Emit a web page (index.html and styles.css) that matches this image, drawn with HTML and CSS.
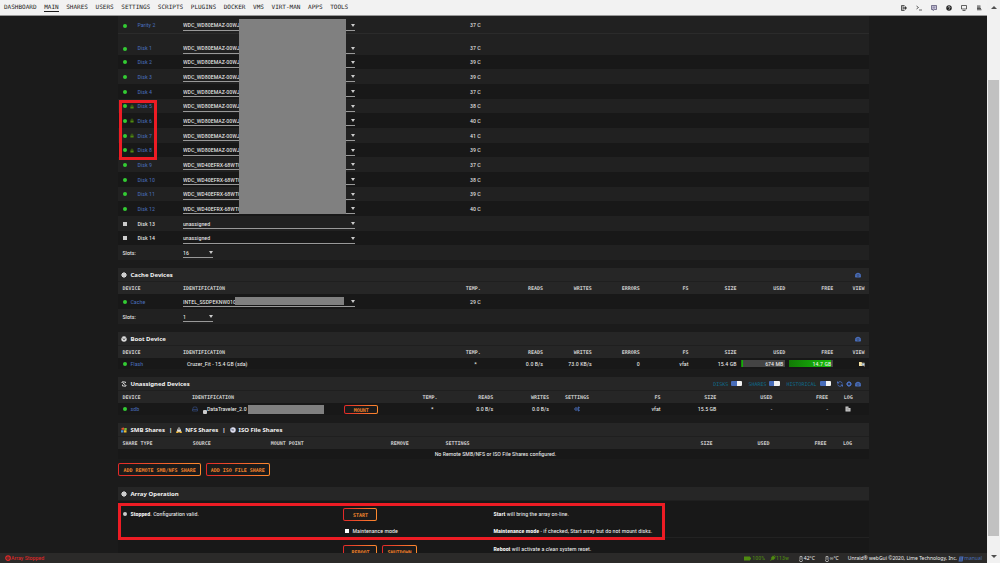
FILE: index.html
```html
<!DOCTYPE html>
<html lang="en">
<head>
<meta charset="utf-8">
<title>Main</title>
<link rel="stylesheet" href="styles.css">
</head>
<body>
<svg class="defs" aria-hidden="true">
  <symbol id="i-lock" viewBox="0 0 10 10"><path d="M1 5h8v5H1z" fill="currentColor"/><path d="M3 5V3a2 2 0 0 1 4 0v2" fill="none" stroke="currentColor" stroke-width="1.5"/></symbol>
  <symbol id="i-gauge" viewBox="0 0 12 12"><path d="M1 11a6 6 0 1 1 10 0z" fill="currentColor"/><path d="M6 10V5M3 8l-1-1M9 8l1-1M4 4l.5 1M8 4l-.5 1" stroke="#262626" stroke-width="1.2"/></symbol>
  <symbol id="i-gear" viewBox="0 0 12 12"><circle cx="6" cy="6" r="3.3" fill="none" stroke="currentColor" stroke-width="2.6"/><path d="M6 0v3M6 9v3M0 6h3M9 6h3M2 2l2 2M8 8l2 2M10 2L8 4M4 8l-2 2" stroke="currentColor" stroke-width="2"/></symbol>
  <symbol id="i-disc" viewBox="0 0 12 12"><circle cx="6" cy="6" r="4.600" fill="#bbb"/><path d="M6 0v12M0 6h12M2 2l8 8M10 2l-8 8" stroke="#ddd" stroke-width="2"/><circle cx="6" cy="6" r="1" fill="#999"/></symbol>
  <symbol id="i-refresh" viewBox="0 0 12 12"><path d="M10.500 5A4.700 4.700 0 0 0 2 3.500M1.500 7A4.700 4.700 0 0 0 10 8.500" fill="none" stroke="currentColor" stroke-width="1.800"/><path d="M0 0v5h5zM12 12V7H7z" fill="currentColor"/></symbol>
</svg>
<div class="window">
  <div class="page">
    <header class="top">
      <nav class="menu">
        <a href="#">DASHBOARD</a><a href="#" class="current">MAIN</a><a href="#">SHARES</a><a href="#">USERS</a><a href="#">SETTINGS</a><a href="#">SCRIPTS</a><a href="#">PLUGINS</a><a href="#">DOCKER</a><a href="#">VMS</a><a href="#">VIRT-MAN</a><a href="#">APPS</a><a href="#">TOOLS</a>
      </nav>
      <div class="tools">
        <a href="#" aria-label="Log out"><svg viewBox="0 0 12 12"><path d="M7 1H1v10h6" fill="#aaa" stroke="#333" stroke-width="1.500"/><path d="M4 5h4V2l4 4-4 4V7H4z" fill="#333"/></svg></a>
        <a href="#" aria-label="Terminal"><svg viewBox="0 0 12 12"><path d="M1 2l4 3-4 3M6 10h6" fill="none" stroke="#333" stroke-width="1.500"/></svg></a>
        <a href="#" aria-label="Feedback"><svg viewBox="0 0 12 12"><path d="M1 1h10v8H7l-3 2V9H1z" fill="#cfcbe0" stroke="#4a4668" stroke-width="1.400"/><path d="M3 4h6M3 6h5" stroke="#4a4668"/></svg></a>
        <a href="#" aria-label="Help"><svg viewBox="0 0 12 12"><circle cx="6" cy="6" r="5.500" fill="#222"/><path d="M4 5a2 2 0 1 1 2 2M6 8v1.500" fill="none" stroke="#eee" stroke-width="1.300"/></svg></a>
        <a href="#" aria-label="Info"><svg viewBox="0 0 12 12"><path d="M1 1h10v7H1zM3 11h6" fill="none" stroke="#333" stroke-width="1.500"/></svg></a>
        <a href="#" aria-label="Log"><svg viewBox="0 0 12 12"><path d="M2 2h7M2 4.500h7M2 7h8M2 9.500h9" stroke="#444" stroke-width="1.800"/></svg></a>
      </div>
    </header>

    <main class="content">
      <table class="grid disks">
        <colgroup><col class="c-dev"><col class="c-id"><col class="c-temp"><col></colgroup>
        <tbody>
          <tr class="parity"><td><i class="dot"></i><a href="#">Parity 2</a></td><td><span class="pick"><select aria-label="Parity 2"><option>WDC_WD80EMAZ-00WJTA0</option></select></span></td><td>37 C</td><td></td></tr>
          <tr class="first"><td><i class="dot"></i><a href="#">Disk 1</a></td><td><span class="pick"><select aria-label="Disk 1"><option>WDC_WD80EMAZ-00WJTA0</option></select></span></td><td>37 C</td><td></td></tr>
        </tbody>
        <tbody class="stripes">
          <tr><td><i class="dot"></i><a href="#">Disk 2</a></td><td><span class="pick"><select aria-label="Disk 2"><option>WDC_WD80EMAZ-00WJTA0</option></select></span></td><td>39 C</td><td></td></tr>
          <tr><td><i class="dot"></i><a href="#">Disk 3</a></td><td><span class="pick"><select aria-label="Disk 3"><option>WDC_WD80EMAZ-00WJTA0</option></select></span></td><td>39 C</td><td></td></tr>
          <tr><td><i class="dot"></i><a href="#">Disk 4</a></td><td><span class="pick"><select aria-label="Disk 4"><option>WDC_WD80EMAZ-00WJTA0</option></select></span></td><td>37 C</td><td></td></tr>
          <tr><td><i class="dot"></i><svg class="lock"><use href="#i-lock"/></svg><a href="#">Disk 5</a></td><td><span class="pick"><select aria-label="Disk 5"><option>WDC_WD80EMAZ-00WJTA0</option></select></span></td><td>38 C</td><td></td></tr>
          <tr><td><i class="dot"></i><svg class="lock"><use href="#i-lock"/></svg><a href="#">Disk 6</a></td><td><span class="pick"><select aria-label="Disk 6"><option>WDC_WD80EMAZ-00WJTA0</option></select></span></td><td>40 C</td><td></td></tr>
          <tr><td><i class="dot"></i><svg class="lock"><use href="#i-lock"/></svg><a href="#">Disk 7</a></td><td><span class="pick"><select aria-label="Disk 7"><option>WDC_WD80EMAZ-00WJTA0</option></select></span></td><td>41 C</td><td></td></tr>
          <tr><td><i class="dot"></i><svg class="lock"><use href="#i-lock"/></svg><a href="#">Disk 8</a></td><td><span class="pick"><select aria-label="Disk 8"><option>WDC_WD80EMAZ-00WJTA0</option></select></span></td><td>39 C</td><td></td></tr>
          <tr><td><i class="dot"></i><a href="#">Disk 9</a></td><td><span class="pick"><select aria-label="Disk 9"><option>WDC_WD40EFRX-68WT0N0</option></select></span></td><td>37 C</td><td></td></tr>
          <tr><td><i class="dot"></i><a href="#">Disk 10</a></td><td><span class="pick"><select aria-label="Disk 10"><option>WDC_WD40EFRX-68WT0N0</option></select></span></td><td>38 C</td><td></td></tr>
          <tr><td><i class="dot"></i><a href="#">Disk 11</a></td><td><span class="pick"><select aria-label="Disk 11"><option>WDC_WD40EFRX-68WT0N0</option></select></span></td><td>39 C</td><td></td></tr>
          <tr><td><i class="dot"></i><a href="#">Disk 12</a></td><td><span class="pick"><select aria-label="Disk 12"><option>WDC_WD40EFRX-68WT0N0</option></select></span></td><td>40 C</td><td></td></tr>
          <tr><td><i class="dot off"></i><span>Disk 13</span></td><td><span class="pick"><select aria-label="Disk 13"><option>unassigned</option></select></span></td><td></td><td></td></tr>
          <tr><td><i class="dot off"></i><span>Disk 14</span></td><td><span class="pick"><select aria-label="Disk 14"><option>unassigned</option></select></span></td><td></td><td></td></tr>
        </tbody>
        <tbody>
          <tr class="slots"><td><label for="slots-a">Slots:</label></td><td><span class="pick short"><select id="slots-a"><option>16</option></select></span></td><td></td><td></td></tr>
        </tbody>
      </table>

      <section>
        <h2><svg class="ico"><use href="#i-disc"/></svg>Cache Devices<a class="end" href="#" aria-label="Dashboard"><svg class="ico"><use href="#i-gauge"/></svg></a></h2>
        <table class="grid main-cols">
          <colgroup><col class="c-dev"><col class="c-id"><col class="c-temp"><col class="c-reads"><col class="c-a"><col class="c-b"><col class="c-a"><col class="c-b"><col class="c-a"><col class="c-b"><col></colgroup>
          <thead><tr><th>DEVICE</th><th>IDENTIFICATION</th><th>TEMP.</th><th>READS</th><th>WRITES</th><th>ERRORS</th><th>FS</th><th>SIZE</th><th>USED</th><th>FREE</th><th>VIEW</th></tr></thead>
          <tbody>
            <tr class="tall"><td><i class="dot"></i><a class="near" href="#">Cache</a></td><td><span class="pick"><select aria-label="Cache"><option>INTEL_SSDPEKNW010T8</option></select><i class="mask mask-cache"></i></span></td><td>29 C</td><td></td><td></td><td></td><td></td><td></td><td></td><td></td><td></td></tr>
            <tr class="slots"><td><label for="slots-c">Slots:</label></td><td><span class="pick short"><select id="slots-c"><option>1</option></select></span></td><td></td><td></td><td></td><td></td><td></td><td></td><td></td><td></td><td></td></tr>
          </tbody>
        </table>
      </section>

      <section>
        <h2><svg class="ico" viewBox="0 0 12 12"><circle cx="6" cy="6" r="5.500" fill="#ddd"/><path d="M0 3l3 1M12 3L9 4" stroke="#262626" stroke-width="1.500"/><path d="M3.500 5.500h5L6 8.500z" fill="#333"/></svg>Boot Device<a class="end" href="#" aria-label="Dashboard"><svg class="ico"><use href="#i-gauge"/></svg></a></h2>
        <table class="grid main-cols">
          <colgroup><col class="c-dev"><col class="c-id"><col class="c-temp"><col class="c-reads"><col class="c-a"><col class="c-b"><col class="c-a"><col class="c-b"><col class="c-a"><col class="c-b"><col></colgroup>
          <thead><tr><th>DEVICE</th><th>IDENTIFICATION</th><th>TEMP.</th><th>READS</th><th>WRITES</th><th>ERRORS</th><th>FS</th><th>SIZE</th><th>USED</th><th>FREE</th><th>VIEW</th></tr></thead>
          <tbody>
            <tr class="low"><td><i class="dot"></i><a class="near" href="#">Flash</a></td><td class="inset">Cruzer_Fit - 15.4 GB (sda)</td><td class="star">*</td><td>0.0 B/s</td><td>73.0 KB/s</td><td>0</td><td>vfat</td><td>15.4 GB</td><td><span class="meter"><i style="width:4%"></i><b>674 MB</b></span></td><td><span class="meter"><i style="width:96%"></i><b>14.7 GB</b></span></td><td><a href="#" aria-label="Browse"><svg class="ico" viewBox="0 0 12 12"><path d="M0 2h5l1 1.500h5V10H0z" fill="#f3dfa2"/><circle cx="8.500" cy="7" r="2.500" fill="#bcd8f5" stroke="#567" stroke-width="1"/><path d="M10 9l2 2.500" stroke="#c98" stroke-width="1.500"/></svg></a></td></tr>
          </tbody>
        </table>
      </section>

      <section>
        <h2><svg class="ico" viewBox="0 0 12 12"><path d="M2 2h7v2M10 10H3V7M1 4l3-3M11 8l-3 3" fill="none" stroke="#ddd" stroke-width="1.800"/><path d="M4 4l5 4" stroke="#ddd" stroke-width="2"/></svg>Unassigned Devices
          <span class="end switches">
            <label>DISKS<input type="checkbox" checked></label>
            <label>SHARES<input type="checkbox" checked></label>
            <label>HISTORICAL<input type="checkbox" checked></label>
            <a href="#" aria-label="Refresh"><svg class="ico"><use href="#i-refresh"/></svg></a>
            <a href="#" aria-label="Settings"><svg class="ico"><use href="#i-gear"/></svg></a>
            <a href="#" aria-label="Dashboard"><svg class="ico"><use href="#i-gauge"/></svg></a>
          </span></h2>
        <table class="grid un-cols">
          <colgroup><col class="u-dev"><col class="u-id"><col class="u-act"><col><col><col><col><col><col><col><col><col class="u-log"></colgroup>
          <thead><tr><th>DEVICE</th><th>IDENTIFICATION</th><th></th><th>TEMP.</th><th>READS</th><th>WRITES</th><th>SETTINGS</th><th>FS</th><th>SIZE</th><th>USED</th><th>FREE</th><th>LOG</th></tr></thead>
          <tbody>
            <tr class="mid"><td><i class="dot"></i><a class="near" href="#">sdb</a></td>
              <td><span class="stick"><svg class="ico blue" viewBox="0 0 12 12"><path d="M1 7l2-5h6l2 5v3H1zM1 7h10" fill="none" stroke="currentColor" stroke-width="1.300"/></svg><i class="plus"></i>DataTraveler_2.0<i class="mask-usb"></i></span></td>
              <td><button type="button" class="btn thin">MOUNT</button></td><td class="star">*</td><td>0.0 B/s</td><td>0.0 B/s</td>
              <td><a href="#" aria-label="Device settings"><svg class="ico" viewBox="0 0 12 12"><circle cx="4" cy="6" r="2.500" fill="none" stroke="currentColor" stroke-width="1.800"/><path d="M9 1v10M7 3h5M7 6h4M7 9h5" stroke="currentColor" stroke-width="1.300"/></svg></a></td>
              <td>vfat</td><td>15.5 GB</td><td>-</td><td>-</td><td><svg class="ico" viewBox="0 0 12 12"><path d="M1 1h6v3h4v7H1z" fill="#ccc"/><path d="M3 4h3M3 6h6M3 8h6" stroke="#777"/></svg></td></tr>
          </tbody>
        </table>
      </section>

      <section>
        <h2><svg class="ico" viewBox="0 0 12 12"><path d="M1 2l5-1v4.500H1z" fill="#e0532c"/><path d="M6.500 2h5v4h-5z" fill="#7db536"/><path d="M0 6.500h5V11H0z" fill="#4a90d9"/><path d="M6 6.500h5V11H6z" fill="#f2c230"/></svg>SMB Shares <span class="bar">|</span>
          <svg class="ico" viewBox="0 0 12 12"><path d="M6 0l3 4 2 6H1l2-6z" fill="#ddd"/><path d="M1 9h4v3H0zM7 9h4l1 3H7z" fill="#f0b429"/><path d="M4.500 3h3v2h-3z" fill="#222"/></svg>NFS Shares <span class="bar">|</span>
          <svg class="ico" viewBox="0 0 12 12"><circle cx="6" cy="6" r="5.500" fill="#dde"/><path d="M6 6L2 2a6 6 0 0 0-1 5z" fill="#9ac"/><circle cx="6" cy="6" r="1.500" fill="#444"/></svg>ISO File Shares</h2>
        <table class="grid share-cols">
          <colgroup><col class="s-type"><col class="s-src"><col class="s-mnt"><col class="s-rem"><col class="s-set"><col><col><col><col class="s-log"></colgroup>
          <thead><tr><th>SHARE TYPE</th><th>SOURCE</th><th>MOUNT POINT</th><th>REMOVE</th><th>SETTINGS</th><th>SIZE</th><th>USED</th><th>FREE</th><th>LOG</th></tr></thead>
          <tbody><tr class="empty"><td colspan="9" class="none">No Remote SMB/NFS or ISO File Shares configured.</td></tr></tbody>
        </table>
        <div class="actions"><button type="button" class="btn">ADD REMOTE SMB/NFS SHARE</button><button type="button" class="btn">ADD ISO FILE SHARE</button></div>
      </section>

      <section class="array">
        <h2><svg class="ico"><use href="#i-disc"/></svg>Array Operation</h2>
        <div class="ops">
          <div class="status"><i class="dot idle"></i><span><b>Stopped</b>. Configuration valid.</span></div>
          <div><button type="button" class="btn wide">START</button></div>
          <div><b>Start</b> will bring the array on-line.</div>
          <div></div>
          <div><label class="tick"><input type="checkbox">Maintenance mode</label></div>
          <div><b>Maintenance mode</b> - if checked, Start array but do not mount disks.</div>
        </div>
        <div class="ops power">
          <div></div>
          <div class="pair"><button type="button" class="btn wide">REBOOT</button><button type="button" class="btn wide">SHUTDOWN</button></div>
          <div><b>Reboot</b> will activate a <em>clean</em> system reset.<br><b>Shutdown</b> will activate a <em>clean</em> system shut down.</div>
        </div>
        <i class="mark mark-array"></i>
      </section>
      <i class="mask mask-disks"></i>
      <i class="mark mark-disks"></i>
    </main>

    <footer class="foot">
      <span class="red"><svg class="ico" viewBox="0 0 12 12"><circle cx="6" cy="6" r="4.500" fill="none" stroke="currentColor" stroke-width="2.500"/><path d="M4 6h4" stroke="currentColor" stroke-width="1.500"/></svg>Array Stopped</span>
      <span class="right">
        <span class="green"><svg class="batt" viewBox="0 0 14 10"><path d="M0 1h12v2h2v4h-2v2H0z" fill="currentColor"/></svg>100%</span>
        <span class="green"><svg class="ico" viewBox="0 0 12 12"><path d="M1 11l2-3c-1-3 1-6 4-6l3 3c0 3-3 5-6 4zM7 3l3-3M9 5l3-3" fill="currentColor" stroke="currentColor"/></svg>113w</span>
        <span class="sens"><svg class="ico" viewBox="0 0 12 12"><path d="M4 1h4v6l1 2-1 2H4L3 9l1-2z" fill="none" stroke="#ccc" stroke-width="1.500"/></svg>42°C</span>
        <span class="sens"><svg class="ico" viewBox="0 0 12 12"><path d="M4 1h4v6l1 2-1 2H4L3 9l1-2z" fill="none" stroke="#ccc" stroke-width="1.500"/></svg>∞°C</span>
        <span class="copy">Unraid® webGui ©2020, Lime Technology, Inc. <a href="#"><svg class="ico" viewBox="0 0 12 12"><path d="M3 1h8L9 11H1z" fill="currentColor"/><path d="M4 4h4M3 8h5" stroke="#222"/></svg>manual</a></span>
      </span>
    </footer>
  </div>
  <div class="scroll" aria-hidden="true"><i class="up"></i><i class="thumb"></i><i class="down"></i></div>
</div>
</body>
</html>
```
FILE: styles.css
```css
* { box-sizing: border-box; }
body {
  margin: 0;
  background: #1b1b1b;
  color: #f2f2f2;
  font-family: "Roboto Condensed", "Open Sans Condensed", "Noto Sans Condensed", "Liberation Sans", sans-serif;
  font-size: 6px;
  line-height: 8px;
}
a { color: #486dba; text-decoration: none; }
.defs { position: absolute; width: 0; height: 0; }
.window { display: flex; height: 100vh; overflow: hidden; }
.page { flex: 1; min-width: 0; display: flex; flex-direction: column; }

.top {
  flex: none;
  display: flex;
  justify-content: space-between;
  align-items: center;
  height: 16px;
  padding: 0 5px 0 4px;
  background: #f2f2f2;
  border-bottom: 1px solid #999;
}
.menu { display: flex; justify-content: space-between; width: 35.2%; font: 6px/8px "DejaVu Sans Mono", monospace; }
.menu a { color: #1c1b1b; border-bottom: 1px solid transparent; }
.menu .current { border-color: #1c1b1b; }
.tools { display: flex; gap: 9px; }
.tools a, .tools svg { display: block; width: 6px; height: 6px; }

.content { position: relative; flex: 1; min-height: 0; overflow: hidden; width: 76%; margin: 0 auto 0 12%; }
section { margin-top: 8px; }
.grid { width: 100%; table-layout: fixed; border-collapse: collapse; }
.grid td, .grid th { padding: 0; text-align: right; white-space: nowrap; }
.grid td:first-child, .grid th:first-child { padding-left: 4px; text-align: left; }
.grid td:nth-child(2), .grid th:nth-child(2) { text-align: left; }
.grid th { height: 12px; padding-bottom: 1px; font: bold 5px/8px "DejaVu Sans Mono", monospace; color: #ccc; background: #262626; }
.grid tbody tr { background: #181818; }

.c-dev { width: 8.6%; }
.c-id { width: 31.6%; }
.c-temp { width: 8.1%; }
.c-reads { width: 8.3%; }
.c-a { width: 6.5%; }
.c-b { width: 6.4%; }
.main-cols td:last-child, .main-cols th:last-child { padding-right: 4px; }

.grid .parity { height: 17px; background: #212121; border-bottom: 1px solid #2b2b2b; }
.grid .parity td { padding-top: 2px; }
.grid .first { height: 22px; background: #212121; }
.grid .first td { padding-top: 8px; }
.stripes tr { height: 15px; }
.stripes tr:nth-child(3n+1) { height: 14px; }
.grid .stripes tr:nth-child(even) { background: #212121; }
.grid .slots { height: 15px; background: #212121; }
.tall { height: 15px; }
.mid { height: 12px; }
.low { height: 11px; }
.empty { height: 10px; }

.dot { display: inline-block; width: 4px; height: 4px; margin: 0 10px 0 1px; border-radius: 2px; background: #33cc33; vertical-align: middle; }
.dot:has(+ .near), .dot.idle { margin-right: 3px; }
.dot.off { background: #ccc; border-radius: 0; }
.dot.idle { background: #ccc; }
.dot:has(+ .lock) { margin-right: 3px; }
.lock { width: 4px; height: 5px; margin-right: 3px; color: #4f8a10; vertical-align: middle; }

.pick { position: relative; display: block; width: 172px; height: 11px; padding-top: 1px; border-bottom: 1px solid #999; }
.pick.short { width: 30px; }
.pick::after { content: ""; position: absolute; right: 0; top: 4px; border: 2px solid transparent; border-top: 3px solid #ccc; border-bottom: 0; }
select { appearance: none; display: block; width: 100%; height: 9px; margin: 0; padding: 0; border: 0; border-radius: 0; outline: 0; background: none; color: inherit; font: inherit; }

h2 { display: flex; align-items: center; gap: 3px; height: 14px; margin: 0; padding: 0 8px 0 3px; background: #262626; border-bottom: 1px solid #1f1f1f; font: 700 6px/8px "Noto Sans", sans-serif; }
.ico { display: inline-block; width: 6px; height: 6px; flex: none; vertical-align: middle; }
.end { margin-left: auto; display: flex; align-items: center; }
.bar { margin: 0 1px; }
.blue { color: #344f87; }
.inset.inset { padding-left: 4px; }
.star.star { padding-right: 4px; }

.meter { position: relative; display: block; width: 44px; height: 7px; margin-left: auto; background: #444; line-height: 7px; }
.meter i { display: block; height: 100%; background: linear-gradient(90deg, #127a05, #17bf0b); }
.meter b { position: absolute; inset: 0 2px 0 0; font-weight: normal; }

.switches { gap: 3px; }
.switches label { display: flex; align-items: center; gap: 3px; margin-right: 3px; color: #0e6c8c; font: 5px/8px "DejaVu Sans Mono", monospace; }
.switches input { appearance: none; width: 11px; height: 5px; margin: 0; border-radius: 1px; background: linear-gradient(90deg, #486dba 50%, #f2f2f2 50%); }
.un-cols .u-dev { width: 9.8%; }
.un-cols .u-id { width: 20.3%; }
.un-cols .u-act { width: 5%; }
.un-cols .u-log { width: 5.4%; }
.un-cols td:nth-child(3) { text-align: left; }
.un-cols td:nth-child(7), .un-cols th:nth-child(7),
.un-cols td:last-child, .un-cols th:last-child { text-align: center; }
.stick { display: flex; align-items: center; height: 9px; }
.plus { width: 4px; height: 4px; margin: 6px 0 0 5px; background: #ccc; border-radius: 1px; }
.mask-usb { width: 76px; height: 9px; margin-left: 1px; background: #808080; }

.share-cols .s-type { width: 9.9%; }
.share-cols .s-src { width: 10.4%; }
.share-cols .s-mnt { width: 16%; }
.share-cols .s-rem { width: 7.3%; }
.share-cols .s-set { width: 28%; }
.share-cols .s-log { width: 5.6%; }
.share-cols th:nth-child(-n+5) { text-align: left; }
.share-cols th:last-child { text-align: center; }
.grid .none.none { text-align: center; }

.btn {
  display: inline-block;
  height: 13px;
  padding: 0 4px;
  border: 1px solid transparent;
  border-radius: 2px;
  background: linear-gradient(#1b1b1b, #1b1b1b) padding-box, linear-gradient(90deg, #e22828, #ff8c2f) border-box;
  color: #f0832c;
  font: bold 5px/8px "DejaVu Sans Mono", monospace;
  vertical-align: top;
}
.btn.wide, .btn.thin { min-width: 34px; }
.btn.thin { height: 9px; }
.actions, .pair { display: flex; gap: 5px; }
.actions { padding-top: 4px; }

.array { position: relative; margin-top: 11px; }
.ops { display: grid; grid-template-columns: 30% 20% 50%; row-gap: 4px; padding: 7px 0 0; background: #181818; border-bottom: 1px solid #222; }
.ops > div { min-height: 8px; line-height: 12px; }
.ops.power { padding-top: 7px; border: 0; }
.ops.power > div { line-height: 7px; }
.status { padding-left: 4px; }
.tick { display: flex; align-items: center; gap: 3px; }
.tick input { appearance: none; width: 4px; height: 4px; margin: 0 0 0 2px; background: #fff; }

.mask { position: absolute; background: #808080; }
.mask-cache { left: 52px; top: 1px; width: 109px; height: 8px; }
.mask-disks { left: 121px; top: 3px; width: 107px; height: 195px; }
.mark { position: absolute; border: 3px solid #ed1c24; }
.mark-disks { left: 1px; top: 84px; width: 38px; height: 60px; }
.mark-array { left: 0; top: 16px; width: 547px; height: 37px; }

.foot { flex: none; display: flex; justify-content: space-between; align-items: center; height: 10px; padding: 0 5px; background: #2b2a29; }
.red { color: #e22828; }
.green { color: #4f8a10; }
.right { display: flex; gap: 5px; }
.batt { width: 7px; height: 5px; margin-right: 1px; vertical-align: middle; }
.sens, .copy { margin-left: 4px; font: 5px/8px "Noto Sans", sans-serif; }

.scroll { flex: none; display: flex; flex-direction: column; align-items: center; width: 13px; background: #f1f1f1; }
.up, .down { height: 0; border: 3px solid transparent; }
.up { margin-top: 3px; border-bottom-color: #505050; }
.thumb { width: 11px; height: 81%; margin-top: 71px; background: #c1c1c1; }
.down { margin: auto 0 2px; border-top-color: #505050; }
```
